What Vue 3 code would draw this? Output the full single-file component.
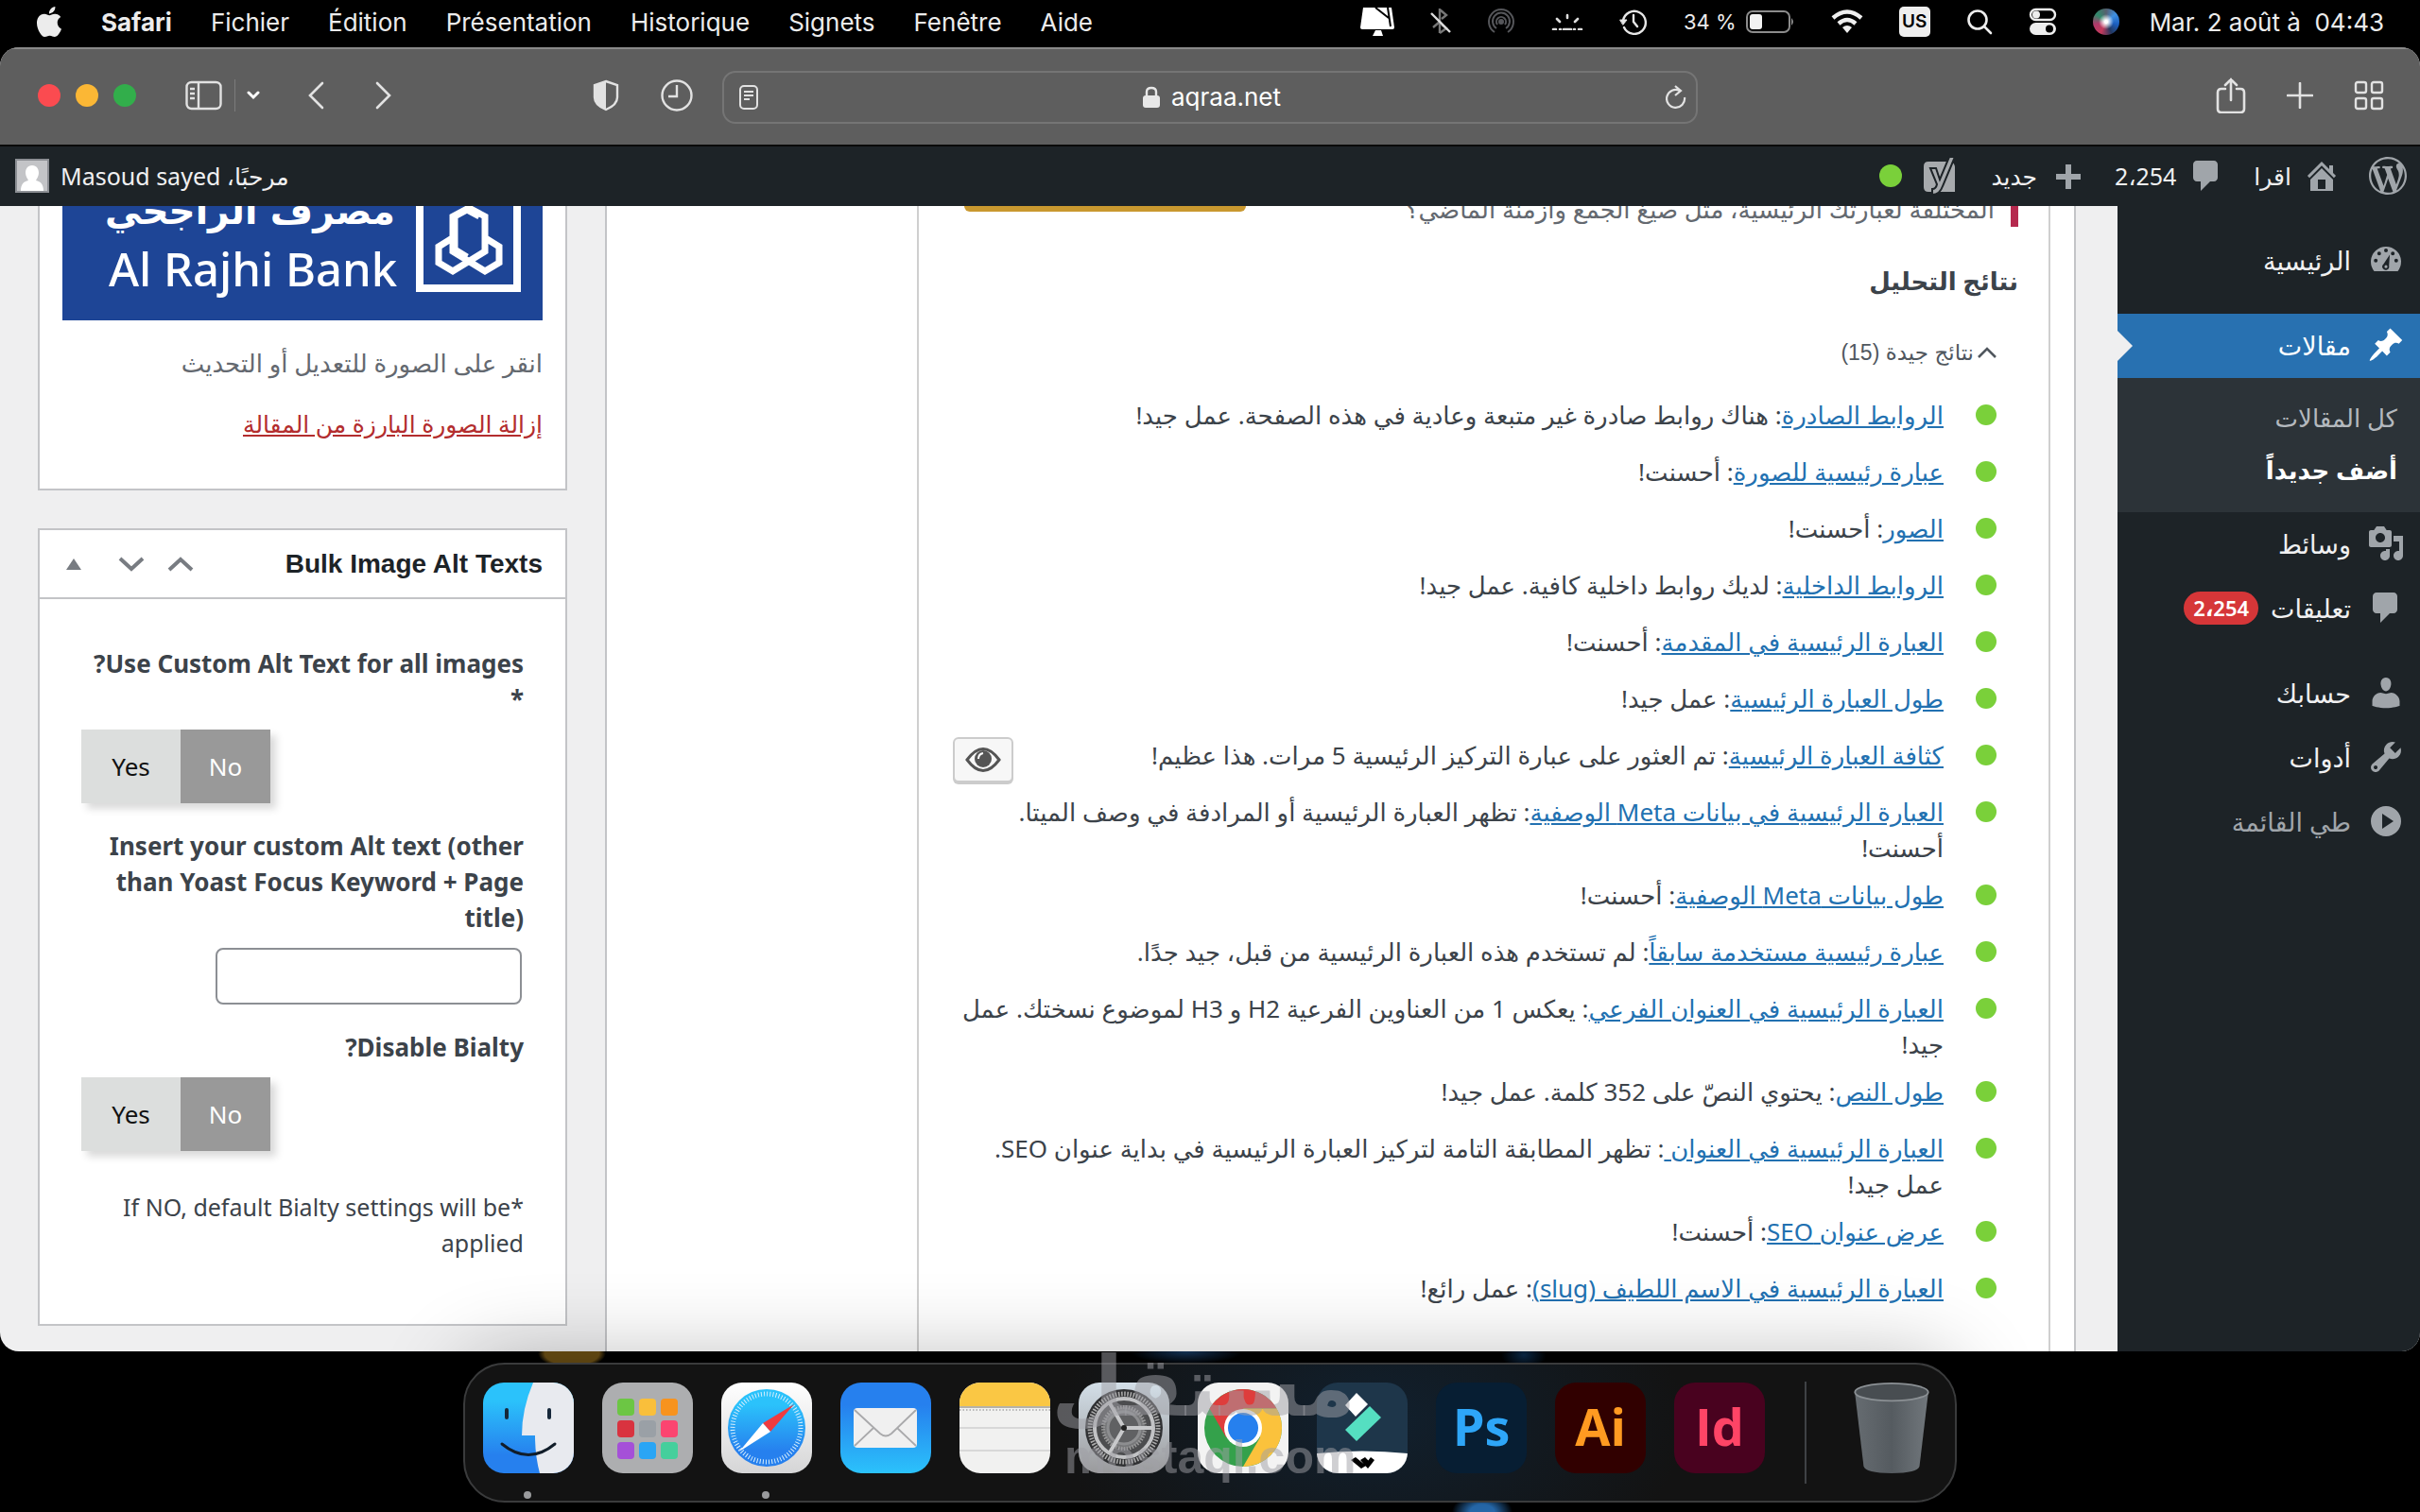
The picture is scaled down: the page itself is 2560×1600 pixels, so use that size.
<script setup>
import { ref } from "vue";

const menus = ["Fichier", "Édition", "Présentation", "Historique", "Signets", "Fenêtre", "Aide"];

// Ikoner til adminlinjen og WordPress-menuen i højre side
const icons = {
  wordpress: "M20 10c0-5.51-4.49-10-10-10C4.48 0 0 4.49 0 10c0 5.52 4.48 10 10 10 5.51 0 10-4.48 10-10zM7.78 15.37L4.37 6.22c.55-.02 1.17-.08 1.17-.08.5-.06.44-1.13-.06-1.11 0 0-1.45.11-2.37.11-.18 0-.37 0-.58-.01C4.12 2.69 6.87 1.11 10 1.11c2.33 0 4.45.87 6.05 2.34-.68-.11-1.65.39-1.65 1.58 0 .74.45 1.36.9 2.1.35.61.55 1.36.55 2.46 0 1.49-1.4 5-1.4 5l-3.03-8.37c.54-.02.82-.17.82-.17.5-.05.44-1.25-.06-1.22 0 0-1.44.12-2.38.12-.87 0-2.33-.12-2.33-.12-.5-.03-.56 1.2-.06 1.22l.92.08 1.26 3.41zM17.41 10c.24-.64.74-1.87.43-4.25.7 1.29 1.05 2.71 1.05 4.25 0 3.29-1.73 6.24-4.4 7.78.97-2.59 1.94-5.2 2.92-7.78zM6.1 18.09C3.12 16.65 1.11 13.53 1.11 10c0-1.3.23-2.48.72-3.59C3.25 10.3 4.67 14.2 6.1 18.09zm4.03-6.63l2.58 6.98c-.86.29-1.76.45-2.71.45-.79 0-1.57-.11-2.29-.33.81-2.38 1.62-4.74 2.42-7.1z",
  home: "M16 8.5l1.53 1.53-1.06 1.06L10 4.6l-6.47 6.49-1.06-1.06L10 2.5l4 4v-2h2v4zm-6-2.46l6 5.99V18H4v-5.97zM12 17v-5H8v5h4z",
  comments: "M5 2h9c1.1 0 2 .9 2 2v7c0 1.1-.9 2-2 2h-2l-5 5v-5H5c-1.1 0-2-.9-2-2V4c0-1.1.9-2 2-2z",
  plus: "M17 9v3h-5v5H9v-5H4V9h5V4h3v5h5z",
  pin: "M10.44 3.02l1.82-1.82 6.36 6.35-1.83 1.82c-1.05-.68-2.48-.57-3.41.36l-.75.75c-.92.93-1.04 2.35-.35 3.41l-1.83 1.82-2.41-2.41-2.8 2.79c-.42.42-3.38 2.71-3.8 2.29s1.86-3.39 2.28-3.81l2.79-2.79L4.1 9.36l1.83-1.82c1.05.69 2.48.57 3.4-.36l.75-.75c.93-.92 1.05-2.35.36-3.41z",
  dashboard: "M3.76 16h12.48A8 8 0 1 0 3.76 16zM10 4a1 1 0 1 1 0 2 1 1 0 0 1 0-2zM6.4 5.6a1 1 0 1 1 0 2 1 1 0 0 1 0-2zM4.6 9.4a1 1 0 1 1 0 2 1 1 0 0 1 0-2zM15.4 9.4a1 1 0 1 1 0 2 1 1 0 0 1 0-2zM13.6 5.6a1 1 0 1 1 0 2 1 1 0 0 1 0-2zM12 7.2l-.4 5.9a1.8 1.8 0 1 1-2.9-.9zM10 12.8a.8.8 0 1 0 0 1.6.8.8 0 0 0 0-1.6z",
  media: "M13 11V4c0-.55-.45-1-1-1h-1.67L9 1H5L3.67 3H2c-.55 0-1 .45-1 1v7c0 .55.45 1 1 1h10c.55 0 1-.45 1-1zM7 4.5c1.38 0 2.5 1.12 2.5 2.5S8.38 9.5 7 9.5 4.5 8.38 4.5 7 5.62 4.5 7 4.5zM14 6h5v10.5c0 1.38-1.12 2.5-2.5 2.5S14 17.88 14 16.5s1.12-2.5 2.5-2.5c.17 0 .34.02.5.05V9h-3V6zm-4 8.05V13h2v3.5c0 1.38-1.12 2.5-2.5 2.5S7 17.88 7 16.5 8.12 14 9.5 14c.17 0 .34.02.5.05z",
  users: "M10 9.25c-2.27 0-2.73-3.44-2.73-3.44C7 4.02 7.82 2 9.97 2c2.16 0 2.98 2.02 2.71 3.81 0 0-.41 3.44-2.68 3.44zM10 10.6L12.72 10c2.39 0 4.52 2.33 4.52 4.53v2.49s-3.65 1.13-7.24 1.13c-3.65 0-7.24-1.13-7.24-1.13v-2.49c0-2.25 1.94-4.48 4.47-4.48z",
  tools: "M16.68 9.77c-1.34 1.34-3.3 1.67-4.95.99l-5.41 6.52c-.99.99-2.59.99-3.58 0s-.99-2.59 0-3.57l6.52-5.42c-.68-1.65-.35-3.61.99-4.95 1.28-1.28 3.12-1.62 4.72-1.06l-2.89 2.89 2.82 2.82 2.86-2.87c.53 1.58.18 3.39-1.08 4.65zM3.81 16.21c.4.39 1.04.39 1.43 0 .4-.4.4-1.04 0-1.43-.39-.4-1.03-.4-1.43 0-.39.39-.39 1.03 0 1.43z",
  collapse: "M10 2a8 8 0 1 1 0 16 8 8 0 0 1 0-16zM8 6v8l6-4z"
};

const results = [
  { link: "الروابط الصادرة", text: ": هناك روابط صادرة غير متبعة وعادية في هذه الصفحة. عمل جيد!" },
  { link: "عبارة رئيسية للصورة", text: ": أحسنت!" },
  { link: "الصور", text: ": أحسنت!" },
  { link: "الروابط الداخلية", text: ": لديك روابط داخلية كافية. عمل جيد!" },
  { link: "العبارة الرئيسية في المقدمة", text: ": أحسنت!" },
  { link: "طول العبارة الرئيسية", text: ": عمل جيد!" },
  { link: "كثافة العبارة الرئيسية", text: ": تم العثور على عبارة التركيز الرئيسية 5 مرات. هذا عظيم!", eye: true },
  { link: "العبارة الرئيسية في بيانات Meta الوصفية", text: ": تظهر العبارة الرئيسية أو المرادفة في وصف الميتا.", more: "أحسنت!" },
  { link: "طول بيانات Meta الوصفية", text: ": أحسنت!" },
  { link: "عبارة رئيسية مستخدمة سابقاً", text: ": لم تستخدم هذه العبارة الرئيسية من قبل، جيد جدًا." },
  { link: "العبارة الرئيسية في العنوان الفرعي", text: ": يعكس 1 من العناوين الفرعية H2 و H3 لموضوع نسختك. عمل", more: "جيد!" },
  { link: "طول النص", text: ": يحتوي النصّ على 352 كلمة. عمل جيد!" },
  { link: "العبارة الرئيسية في العنوان ", text: ": تظهر المطابقة التامة لتركيز العبارة الرئيسية في بداية عنوان SEO.", more: "عمل جيد!" },
  { link: "عرض عنوان SEO", text: ": أحسنت!" },
  { link: "العبارة الرئيسية في الاسم اللطيف (slug)", text: ": عمل رائع!" }
];

const useCustom = ref("no");
const disableBialty = ref("no");
const altText = ref("");

const launchpad = ["#6cc644", "#f9bf3b", "#f7931e", "#d9333f", "#9aa0a6", "#fb4570", "#a550d8", "#2aa5f5", "#45cf9c"];
</script>

<template>
  <div class="desktop">
    <header class="menubar">
      <svg class="apple" viewBox="0 0 24 24" width="32" height="32" fill="#ececec">
        <path d="M12.152 6.896c-.948 0-2.415-1.078-3.96-1.04-2.04.027-3.91 1.183-4.961 3.014-2.117 3.675-.546 9.103 1.519 12.09 1.013 1.454 2.208 3.09 3.792 3.039 1.52-.065 2.09-.987 3.935-.987 1.831 0 2.35.987 3.96.948 1.637-.026 2.676-1.48 3.676-2.948 1.156-1.688 1.636-3.325 1.662-3.415-.039-.013-3.182-1.221-3.22-4.857-.026-3.04 2.48-4.494 2.597-4.559-1.429-2.09-3.623-2.324-4.39-2.376-2-.156-3.675 1.09-4.61 1.09zM15.53 3.83c.843-1.012 1.4-2.427 1.245-3.83-1.207.052-2.662.805-3.532 1.818-.78.896-1.454 2.338-1.273 3.714 1.338.104 2.715-.688 3.559-1.701" />
      </svg>
      <b>Safari</b>
      <span v-for="m in menus" :key="m">{{ m }}</span>

      <div class="status">
        <svg width="36" height="30" viewBox="0 0 36 30">
          <path d="M3 0h30l3 21q0 2-2 2H2q-2 0-2-2z" fill="#fff" />
          <path d="M16 0l14 11M29 0l3 20" fill="none" stroke="#000" stroke-width="2" />
          <path d="M16 24h6l2 6H13z" fill="#fff" />
        </svg>
        <svg width="22" height="28" viewBox="0 0 22 28" fill="none" stroke-width="2.4">
          <path d="M3 20l7-6M10 26V1l7 6-5 4M12 17l5 4-7 5" stroke="#777" />
          <path d="M1 5l20 20" stroke="#ddd" />
        </svg>
        <svg width="30" height="28" viewBox="0 0 30 28" fill="none" stroke="#55565a" stroke-width="2">
          <path d="M8 25a13 13 0 1 1 14 0M10 21a9 9 0 1 1 10 0M11 17a5 5 0 1 1 8 0" />
          <circle cx="15" cy="14" r="2" fill="#55565a" />
        </svg>
        <svg width="34" height="18" viewBox="0 0 34 18" fill="none" stroke="#ddd" stroke-width="2.6" stroke-linecap="round">
          <path d="M17 2v3M6 6l3 3M28 6l-3 3M2 17h3M29 17h3M13 17h8M9 17h1M24 17h1" />
        </svg>
        <svg width="30" height="28" viewBox="0 0 30 28" fill="none" stroke="#e6e6e6" stroke-width="2.4" stroke-linecap="round">
          <path d="M5 20a12 12 0 1 0-1-7M15 7v7l4 5" />
          <path d="M1 12h7l-4 5z" fill="#e6e6e6" stroke-width="1" />
        </svg>
        <span class="battery">34 %
          <svg width="52" height="26" viewBox="0 0 52 26">
            <rect x="1" y="2" width="45" height="22" rx="6" fill="none" stroke="#8c8c8c" stroke-width="2" />
            <rect x="4" y="5" width="13" height="16" rx="3" fill="#f2f2f2" />
            <path d="M48 9q4 4 0 8z" fill="#8c8c8c" />
          </svg>
        </span>
        <svg width="34" height="26" viewBox="0 0 34 26" fill="none" stroke="#eee" stroke-width="4.4">
          <path d="M2 9q15-13 30 0M8 15q9-8 18 0" />
          <path d="M17 25l-5-6q5-4 10 0z" fill="#eee" stroke="none" />
        </svg>
        <span class="lang">US</span>
        <svg width="28" height="28" viewBox="0 0 28 28" fill="none" stroke="#eee" stroke-width="2.6" stroke-linecap="round">
          <circle cx="12" cy="12" r="9.5" /><path d="M19 19l7 7" />
        </svg>
        <svg width="30" height="30" viewBox="0 0 30 30">
          <rect x="2" y="2" width="26" height="11" rx="5.5" fill="none" stroke="#eee" stroke-width="2.4" />
          <circle cx="8" cy="7.5" r="4" fill="#eee" />
          <rect x="1" y="16" width="28" height="13" rx="6.5" fill="#eee" />
          <circle cx="22" cy="22.5" r="4" fill="#000" />
        </svg>
        <i class="siri"></i>
        <span>Mar. 2 août à &nbsp;04:43</span>
      </div>
    </header>

    <main class="window">
      <div class="toolbar">
        <div class="tools-left">
          <i class="light red"></i><i class="light yellow"></i><i class="light green"></i>
          <button class="tool sidebar-toggle" aria-label="Barre latérale">
            <svg width="40" height="32" viewBox="0 0 40 32" fill="none" stroke="#e2e2e2" stroke-width="2.4">
              <rect x="1.5" y="2" width="36" height="28" rx="5" /><path d="M14 2v28M5 9h5M5 14h5M5 19h5" />
            </svg>
          </button>
          <i class="divider"></i>
          <button class="tool" aria-label="Groupes">
            <svg width="14" height="10" viewBox="0 0 14 10" fill="none" stroke="#fff" stroke-width="3" stroke-linecap="round"><path d="M2 2l5 5 5-5" /></svg>
          </button>
          <button class="tool back" aria-label="Précédent">
            <svg width="18" height="30" viewBox="0 0 18 30" fill="none" stroke="#e2e2e2" stroke-width="2.6" stroke-linecap="round"><path d="M16 2L3 15l13 13" /></svg>
          </button>
          <button class="tool forward" aria-label="Suivant">
            <svg width="18" height="30" viewBox="0 0 18 30" fill="none" stroke="#e2e2e2" stroke-width="2.6" stroke-linecap="round"><path d="M2 2l13 13L2 28" /></svg>
          </button>
          <button class="tool shield" aria-label="Confidentialité">
            <svg width="28" height="34" viewBox="0 0 28 34">
              <path d="M14 2l12 4v13q0 8-12 13Q2 27 2 19V6z" fill="none" stroke="#e2e2e2" stroke-width="2.4" />
              <path d="M14 2L2 6v13q0 8 12 13z" fill="#e2e2e2" />
            </svg>
          </button>
          <button class="tool" aria-label="Historique">
            <svg width="34" height="34" viewBox="0 0 34 34" fill="none" stroke="#e2e2e2" stroke-width="2.4"><circle cx="17" cy="17" r="15.5" /><path d="M17 6v12H8" /></svg>
          </button>
        </div>
        <div class="url">
          <svg width="20" height="26" viewBox="0 0 20 26" fill="none" stroke="#e2e2e2" stroke-width="2"><rect x="1" y="1" width="18" height="24" rx="4" /><path d="M5 7h10M5 11h10M5 15h6" /></svg>
          <div class="host">
            <svg width="18" height="24" viewBox="0 0 18 24"><rect y="10" width="18" height="13" rx="3" fill="#e8e8e8" /><path d="M4 11V6q0-4 5-4t5 4v5" fill="none" stroke="#e8e8e8" stroke-width="2.4" /></svg>
            aqraa.net
          </div>
          <svg width="22" height="26" viewBox="0 0 22 26" fill="none" stroke="#e2e2e2" stroke-width="2.2"><path d="M15 6A9.500 9.500 0 1 0 20 13M10 1l6 5-6 5" /></svg>
        </div>
        <div class="tools-right">
          <button class="tool" aria-label="Partager">
            <svg width="32" height="38" viewBox="0 0 32 38" fill="none" stroke="#e2e2e2" stroke-width="2.6" stroke-linecap="round"><path d="M10 12H6q-4 0-4 4v17q0 4 4 4h20q4 0 4-4V16q0-4-4-4h-4M16 24V2M10 8l6-6 6 6" /></svg>
          </button>
          <button class="tool" aria-label="Nouvel onglet">
            <svg width="28" height="28" viewBox="0 0 28 28" stroke="#e2e2e2" stroke-width="2.6" stroke-linecap="round"><path d="M14 1v26M1 14h26" /></svg>
          </button>
          <button class="tool" aria-label="Onglets">
            <svg width="32" height="32" viewBox="0 0 32 32" fill="none" stroke="#e2e2e2" stroke-width="2.4">
              <rect x="2" y="2" width="11" height="11" rx="2" /><rect x="19" y="2" width="11" height="11" rx="2" />
              <rect x="2" y="19" width="11" height="11" rx="2" /><rect x="19" y="19" width="11" height="11" rx="2" />
            </svg>
          </button>
        </div>
      </div>

      <div class="wp" dir="rtl">
        <nav class="adminbar">
          <a href="#"><svg class="dash" viewBox="0 0 20 20"><path :d="icons.wordpress" /></svg></a>
          <a href="#"><svg class="dash" viewBox="0 0 20 20"><path :d="icons.home" fill-rule="evenodd" /></svg>اقرا</a>
          <a href="#"><svg class="dash" viewBox="0 0 20 20"><path :d="icons.comments" /></svg><bdi>2،254</bdi></a>
          <a href="#"><svg class="dash" viewBox="0 0 20 20"><path :d="icons.plus" /></svg>جديد</a>
          <a href="#" class="yoast">
            <svg width="36" height="42" viewBox="0 0 36 42">
              <path d="M6 6h24q4 2 4 6v26H6q-5 0-5-5V11q0-5 5-5z" fill="#a7aaad" />
              <path d="M28 1h6L21 32q-3 9-11 9v-6q4 0 5-5L8 13h6l4 12z" fill="#a7aaad" stroke="#1d2327" stroke-width="2" />
            </svg>
            <i class="score"></i>
          </a>
          <a href="#" class="user">مرحبًا، Masoud sayed
            <svg width="36" height="36" viewBox="0 0 36 36"><rect width="36" height="36" fill="#8c8f94" /><rect x="2" y="2" width="32" height="32" fill="#c3c4c7" /><path d="M18 7c5 0 7 4 7 8 0 3-2 6-3 8 5 1 8 4 8 11H6c0-7 3-10 8-11-1-2-3-5-3-8 0-4 2-8 7-8z" fill="#fff" /></svg>
          </a>
        </nav>

        <div class="body">
          <aside class="adminmenu">
            <a href="#" class="item"><svg class="dash" viewBox="0 0 20 20"><path :d="icons.dashboard" fill-rule="evenodd" /></svg>الرئيسية</a>
            <a href="#" class="item current gap"><svg class="dash" viewBox="0 0 20 20"><path :d="icons.pin" /></svg>مقالات</a>
            <div class="submenu">
              <a href="#">كل المقالات</a>
              <a href="#" class="active">أضف جديداً</a>
            </div>
            <a href="#" class="item"><svg class="dash" viewBox="0 0 20 20"><path :d="icons.media" fill-rule="evenodd" /></svg>وسائط</a>
            <a href="#" class="item"><svg class="dash" viewBox="0 0 20 20"><path :d="icons.comments" /></svg>تعليقات <bdi class="count">2،254</bdi></a>
            <a href="#" class="item gap"><svg class="dash" viewBox="0 0 20 20"><path :d="icons.users" /></svg>حسابك</a>
            <a href="#" class="item"><svg class="dash" viewBox="0 0 20 20"><path :d="icons.tools" fill-rule="evenodd" /></svg>أدوات</a>
            <button class="item collapse"><svg class="dash" viewBox="0 0 20 20"><path :d="icons.collapse" fill-rule="evenodd" /></svg>طي القائمة</button>
          </aside>

          <section class="editor">
            <div class="panel">
              <div class="notice">
                <p>المختلفة لعبارتك الرئيسية، مثل صيغ الجمع وأزمنة الماضي؟</p>
                <i class="upsell"></i>
              </div>
              <h2>نتائج التحليل</h2>
              <button class="group">
                <svg width="22" height="14" viewBox="0 0 22 14" fill="none" stroke="#50575e" stroke-width="2.6"><path d="M2 12l9-9 9 9" /></svg>
                نتائج جيدة (15)
              </button>
              <ul class="results">
                <li v-for="r in results" :key="r.link">
                  <i class="bullet"></i>
                  <p><a href="#">{{ r.link }}</a>{{ r.text }}<template v-if="r.more"><br />{{ r.more }}</template></p>
                  <button v-if="r.eye" class="eye" aria-label="إبراز">
                    <svg width="38" height="26" viewBox="0 0 38 26">
                      <path d="M2 13Q19-10 36 13 19 36 2 13z" fill="none" stroke="#555" stroke-width="3" />
                      <circle cx="19" cy="12" r="9" fill="#555" /><path d="M14 12q0-5 5-6" fill="none" stroke="#fff" stroke-width="2" />
                    </svg>
                  </button>
                </li>
              </ul>
            </div>
          </section>

          <aside class="metaboxes">
            <div class="box featured">
              <svg class="bank" viewBox="0 0 508 121" direction="ltr">
                <rect width="508" height="121" fill="#1e4596" />
                <text x="352" y="19" class="bank-ar" direction="rtl">مصرف الراجحي</text>
                <text x="49" y="85" class="bank-en">Al Rajhi Bank</text>
                <path d="M378 -10v97h103v-97" fill="none" stroke="#fff" stroke-width="8" />
                <path d="M414 32V12l15-9 15 9v32l17 11" fill="none" stroke="none" />
                <g fill="none" stroke="#fff" stroke-width="7">
                  <path d="M429 54l-13-8V11l13-7 13 7" transform="translate(-1 0)" />
                  <path d="M414 33l-16 10v17l15 9 34-21V11l-17-9-17 9v37l34 21 15-9V43l-16-10" />
                </g>
              </svg>
              <p class="hint">انقر على الصورة للتعديل أو التحديث</p>
              <a href="#" class="remove">إزالة الصورة البارزة من المقالة</a>
            </div>

            <div class="box bialty">
              <div class="head">
                <h2>Bulk Image Alt Texts</h2>
                <button aria-label="أعلى"><svg width="28" height="16" viewBox="0 0 28 16" fill="none" stroke="#787c82" stroke-width="4"><path d="M2 14L14 3l12 11" /></svg></button>
                <button aria-label="أسفل"><svg width="28" height="16" viewBox="0 0 28 16" fill="none" stroke="#787c82" stroke-width="4"><path d="M2 2l12 11L26 2" /></svg></button>
                <button class="toggle" aria-label="طي"><svg width="16" height="12" viewBox="0 0 16 12" fill="#787c82"><path d="M0 12L8 0l8 12z" /></svg></button>
              </div>
              <div class="inside">
                <p class="label">Use Custom Alt Text for all images?<br />*</p>
                <div class="switch" dir="ltr">
                  <label :class="{ on: useCustom === 'yes' }"><input v-model="useCustom" type="radio" name="custom" value="yes" />Yes</label>
                  <label :class="{ on: useCustom === 'no' }"><input v-model="useCustom" type="radio" name="custom" value="no" />No</label>
                </div>
                <label class="label" for="alt" dir="ltr">Insert your custom Alt text (other<br />than Yoast Focus Keyword + Page<br />title)</label>
                <input id="alt" v-model="altText" class="alt" type="text" />
                <p class="label">Disable Bialty?</p>
                <div class="switch" dir="ltr">
                  <label :class="{ on: disableBialty === 'yes' }"><input v-model="disableBialty" type="radio" name="disable" value="yes" />Yes</label>
                  <label :class="{ on: disableBialty === 'no' }"><input v-model="disableBialty" type="radio" name="disable" value="no" />No</label>
                </div>
                <p class="note">*If NO, default Bialty settings will be<br />applied</p>
              </div>
            </div>
          </aside>
        </div>
      </div>
    </main>

    <footer class="shelf">
      <div class="dock">
        <!-- Finder -->
        <svg class="app" viewBox="0 0 96 96">
          <defs>
            <linearGradient id="blue" x2="0" y2="1"><stop offset=".2" stop-color="#2bc2fb" /><stop offset=".8" stop-color="#2680ee" /></linearGradient>
            <linearGradient id="blueUp" x2="0" y2="1"><stop offset=".25" stop-color="#2680ee" /><stop offset="1" stop-color="#2bc2fb" /></linearGradient>
            <linearGradient id="white" x2="0" y2="1"><stop offset="0" stop-color="#fff" /><stop offset="1" stop-color="#d5d5d6" /></linearGradient>
            <linearGradient id="steel" x2="0" y2="1"><stop offset="0" stop-color="#d3dfe8" /><stop offset="1" stop-color="#9a9a9c" /></linearGradient>
            <linearGradient id="bin"><stop offset="0" stop-color="#666c71" /><stop offset=".5" stop-color="#555b60" /><stop offset="1" stop-color="#71777c" /></linearGradient>
            <clipPath id="tile"><rect width="96" height="96" rx="22" /></clipPath>
          </defs>
          <g clip-path="url(#tile)">
            <rect width="96" height="96" fill="url(#blue)" />
            <path d="M53 0Q41 28 41 56h14q0 22 5 40h36V0z" fill="#e8eaef" />
            <path d="M25 29v8M70 29v8" stroke="#16283a" stroke-width="4" stroke-linecap="round" />
            <path d="M20 65q28 23 56 0" fill="none" stroke="#111d29" stroke-width="3" stroke-linecap="round" />
          </g>
          <circle cx="47" cy="119" r="4" fill="#9a9b9d" />
        </svg>
        <!-- Launchpad -->
        <svg class="app" viewBox="0 0 96 96">
          <rect width="96" height="96" rx="22" fill="#adaeb0" />
          <rect v-for="(c, i) in launchpad" :key="c" :x="16 + (i % 3) * 23" :y="17 + Math.floor(i / 3) * 23" width="18" height="18" rx="4" :fill="c" />
        </svg>
        <!-- Safari -->
        <svg class="app" viewBox="0 0 96 96">
          <rect width="96" height="96" rx="22" fill="url(#white)" />
          <circle cx="48" cy="48" r="41" fill="url(#blue)" />
          <circle cx="48" cy="48" r="36" fill="none" stroke="#d7eefc" stroke-width="5" stroke-dasharray="1 2.14" />
          <path d="M77 23L44 43l8 9z" fill="#ef3b3f" /><path d="M19 73l25-30 8 9z" fill="#fff" />
          <circle cx="47" cy="119" r="4" fill="#9a9b9d" />
        </svg>
        <!-- Mail -->
        <svg class="app" viewBox="0 0 96 96">
          <rect width="96" height="96" rx="22" fill="url(#blueUp)" />
          <rect x="14" y="27" width="67" height="42" rx="4" fill="#f0f0f0" />
          <path d="M15 67l20-19M80 67L60 48M15 29l27 25q6 5 12 0l26-25" fill="none" stroke="#a9a9ab" stroke-width="1.8" />
        </svg>
        <!-- Notes -->
        <svg class="app" viewBox="0 0 96 96">
          <g clip-path="url(#tile)">
            <rect width="96" height="96" fill="#f1f1f0" /><rect width="96" height="25" fill="#fac744" />
            <path d="M0 26h96" stroke="#b5b2a8" stroke-width="2" />
            <path d="M0 29h96" stroke="#b9b9b9" stroke-width="2" stroke-dasharray="1.5 2" />
            <path d="M0 48h96M0 72h96" stroke="#d0d0d0" stroke-width="1.6" />
          </g>
        </svg>
        <!-- Préférences -->
        <svg class="app" viewBox="0 0 96 96">
          <rect width="96" height="96" rx="22" fill="url(#steel)" />
          <circle cx="48" cy="48" r="41" fill="#303133" />
          <circle cx="48" cy="48" r="36" fill="none" stroke="#aaa" stroke-width="5" stroke-dasharray="1.6 1.54" />
          <circle cx="48" cy="48" r="31" fill="#4c4d4f" stroke="#c2c3c5" stroke-width="4" />
          <circle cx="48" cy="48" r="22" fill="#77787a" stroke="#999" stroke-width="4" stroke-dasharray="1.5 1.5" />
          <circle cx="48" cy="48" r="17" fill="#606163" stroke="#8d8e90" stroke-width="3" />
          <path d="M48 48h30M48 48L33 22M48 48L33 74" stroke="#c8c9cb" stroke-width="4" />
          <circle cx="48" cy="48" r="3" fill="#222" />
        </svg>
        <!-- Chrome -->
        <svg class="app" viewBox="0 0 96 96">
          <rect width="96" height="96" rx="22" fill="#f3f3f3" />
          <circle cx="48" cy="48" r="41" fill="#34a14b" />
          <path d="M12.500 27.500A41 41 0 0 1 83.500 27.500H48V48L30 58z" fill="#de3d3c" />
          <path d="M48 27.500h35.500A41 41 0 0 1 48 89l18-31z" fill="#fbc23c" />
          <circle cx="48" cy="48" r="20" fill="#fff" /><circle cx="48" cy="48" r="16" fill="#2680ee" />
        </svg>
        <!-- Filmora -->
        <svg class="app" viewBox="0 0 96 96">
          <g clip-path="url(#tile)">
            <rect width="96" height="96" fill="#1e364a" /><path d="M0 75q48-5 96 0v21H0z" fill="#fff" />
            <path d="M42 11l12 12-13 13-11-12z" fill="#fff" /><path d="M56 25l12 12-26 25-12-12z" fill="#55dfc1" />
            <path d="M36 82l5-3 11 9-5 3zM46 82l5-3 7 7-4 5zM54 83l3-4 4 3-3 4z" fill="#000" />
          </g>
        </svg>
        <span class="app adobe ps">Ps</span>
        <span class="app adobe ai">Ai</span>
        <span class="app adobe id">Id</span>
        <i class="bar"></i>
        <svg class="app" viewBox="0 0 96 104">
          <path d="M6 12l10 84q2 8 32 8t32-8l10-84z" fill="url(#bin)" />
          <ellipse cx="48" cy="11" rx="42" ry="10" fill="#484d51" stroke="#8b9094" stroke-width="2" />
        </svg>
      </div>
      <div class="watermark">
        <span dir="rtl">مستقل</span>
        <b>mostaql.com</b>
      </div>
    </footer>
  </div>
</template>

<style>
body {
  margin: 0;
  background: #000;
}
</style>

<style scoped>
.desktop {
  height: 100vh;
  display: flex;
  flex-direction: column;
  overflow: hidden;
  background:
    radial-gradient(ellipse 36px 16px at 605px 1432px, #6b4f14 80%, transparent),
    radial-gradient(ellipse 60px 14px at 1255px 1430px, #17395f, transparent),
    radial-gradient(ellipse 24px 16px at 1612px 1434px, #0d2b4b, transparent),
    radial-gradient(ellipse 32px 20px at 1568px 1600px, #2b76c0 40%, transparent),
    #000;
  font-family: "Noto Sans", "DejaVu Sans", sans-serif;
  font-size: 26px;
}

p, h2, ul {
  margin: 0;
  padding: 0;
}

svg {
  display: block;
  flex: none;
}

button {
  border: none;
  background: none;
  padding: 0;
  font: inherit;
  color: inherit;
  cursor: pointer;
}

/* Menulinje */
.menubar {
  height: 50px;
  flex: none;
  display: flex;
  align-items: center;
  gap: 41px;
  padding: 0 38px 4px 36px;
  box-sizing: border-box;
  color: #ececec;
  font-family: Inter, sans-serif;
  font-size: 26px;
  white-space: nowrap;
}

.apple {
  margin-right: -2px;
}

.status {
  margin-left: auto;
  display: flex;
  align-items: center;
  gap: 38px;
}

.status > :last-child {
  margin-left: -6px;
}

.battery {
  display: flex;
  align-items: center;
  gap: 10px;
  font-size: 22px;
}

.lang {
  background: #eee;
  color: #000;
  border-radius: 5px;
  height: 32px;
  width: 33px;
  line-height: 32px;
  text-align: center;
  font-size: 19px;
  font-weight: 600;
}

.siri {
  width: 28px;
  height: 28px;
  border-radius: 50%;
  background: radial-gradient(circle, #fff 8%, transparent 40%), conic-gradient(#56606e, #3f8fe0, #1b5fc0, #23385f, #c33a5c, #b03a6b, #2f8a6b, #56606e);
}

/* Safari-vindue */
.window {
  flex: 1;
  min-height: 0;
  display: flex;
  flex-direction: column;
  border-radius: 20px;
  overflow: hidden;
  background: #efeff0;
}

.toolbar {
  height: 105px;
  flex: none;
  box-sizing: border-box;
  display: grid;
  grid-template-columns: 1fr minmax(0, 1032px) 1fr;
  align-items: center;
  background: #5e5e5e;
  border-top: 2px solid #8a8a8a;
  border-bottom: 2px solid #0a0a0a;
}

.tools-left,
.tools-right {
  display: flex;
  align-items: center;
  padding-bottom: 3px;
}

.tools-left {
  padding-left: 40px;
  padding-right: 31px;
}

.tools-right {
  justify-content: flex-end;
  gap: 43px;
  padding-right: 38px;
}

.light {
  width: 24px;
  height: 24px;
  margin-right: 16px;
  border-radius: 50%;
}

.red { background: #fb4b50; }
.yellow { background: #fbb735; }
.green { background: #32ae4b; }

.sidebar-toggle {
  margin-left: 36px;
}

.divider {
  width: 1px;
  height: 34px;
  margin: 0 12px;
  background: #7c7c7c;
}

.back { margin-left: 50px; }
.forward { margin-left: 54px; }
.shield { margin: 0 44px 0 auto; }

.url {
  display: flex;
  align-items: center;
  justify-content: space-between;
  height: 56px;
  padding: 0 10px 0 16px;
  box-sizing: border-box;
  border: 2px solid #757575;
  border-radius: 14px;
}

.host {
  display: flex;
  align-items: center;
  gap: 12px;
  color: #fff;
  font-family: Inter, sans-serif;
  font-size: 26px;
}

/* WordPress */
.wp {
  flex: 1;
  min-height: 0;
  display: flex;
  flex-direction: column;
}

.adminbar {
  height: 63px;
  flex: none;
  display: flex;
  align-items: center;
  gap: 30px;
  padding: 0 14px 2px 16px;
  box-sizing: border-box;
  background: #1d2327;
  font-size: 25px;
}

.adminbar a {
  display: flex;
  align-items: center;
  gap: 12px;
  color: #f0f0f1;
  text-decoration: none;
}

.dash {
  width: 40px;
  height: 40px;
  fill: #a0a5aa;
}

.adminbar .yoast {
  gap: 22px;
  margin-right: 6px;
}

.score {
  width: 24px;
  height: 24px;
  border-radius: 50%;
  background: #7ad03a;
}

.adminbar .user {
  margin-right: auto;
}

.body {
  flex: 1;
  min-height: 0;
  display: flex;
  overflow: hidden;
}

.adminmenu {
  width: 320px;
  flex: none;
  padding-top: 24px;
  box-sizing: border-box;
  background: #1d2327;
}

.item {
  display: flex;
  align-items: center;
  gap: 17px;
  width: 100%;
  height: 68px;
  padding: 0 16px 2px;
  box-sizing: border-box;
  color: #f0f0f1;
  font-size: 27px;
  text-decoration: none;
}

.gap {
  margin-top: 22px;
}

.current {
  position: relative;
  background: #2871b1;
  color: #fff;
}

.current .dash {
  fill: #fff;
}

.current::after {
  content: "";
  position: absolute;
  left: 0;
  top: 18px;
  border: 16px solid transparent;
  border-left-color: #efeff0;
  border-right: 0;
}

.submenu {
  padding: 15px 24px 17px;
  background: #2c3338;
}

.submenu a {
  display: block;
  line-height: 55px;
  color: #b4b9be;
  text-decoration: none;
}

.submenu .active {
  color: #fff;
  font-weight: 700;
}

.count {
  margin-right: -4px;
  padding: 0 10px;
  line-height: 35px;
  border-radius: 18px;
  background: #d63638;
  color: #fff;
  font-size: 22px;
  font-weight: 600;
}

.collapse {
  color: #a0a5aa;
}

.editor {
  flex: 1;
  min-width: 0;
  display: flex;
  margin-right: 44px;
  padding-right: 25px;
  background: #fff;
  border-right: 2px solid #c3c4c7;
  border-left: 2px solid #c3c4c7;
}

.panel {
  flex: 1;
  min-width: 0;
  margin-left: 328px;
  padding: 0 32px 0 36px;
  border-right: 2px solid #cfcfcf;
  border-left: 2px solid #cfcfcf;
  color: #3c434a;
}

.notice {
  display: flex;
  justify-content: space-between;
  align-items: flex-end;
  height: 22px;
  padding: 0 17px 0 12px;
  overflow: hidden;
  border-right: 8px solid #b5294e;
  color: #646970;
}

.notice p {
  line-height: 38px;
}

.upsell {
  align-self: flex-start;
  width: 298px;
  height: 6px;
  border-radius: 0 0 8px 8px;
  background: #c9982f;
}

.panel h2 {
  margin-top: 38px;
  font-size: 26px;
  line-height: 38px;
}

.group {
  display: flex;
  align-items: center;
  gap: 3px;
  height: 38px;
  margin: 38px 22px 28px 0;
  color: #50575e;
  font-family: "Liberation Sans", "DejaVu Sans", sans-serif;
  font-size: 23px;
}

.results {
  list-style: none;
}

.results li {
  display: flex;
  gap: 34px;
  min-height: 48px;
  margin: 0 23px 12px 0;
  line-height: 38px;
}

.bullet {
  flex: none;
  width: 22px;
  height: 22px;
  margin-top: 8px;
  border-radius: 50%;
  background: #7ad03a;
}

.results p {
  flex: 1;
  white-space: nowrap;
}

.results a {
  color: #2271b1;
}

.eye {
  flex: none;
  display: grid;
  place-items: center;
  width: 64px;
  height: 48px;
  border: 2px solid #ccc;
  border-radius: 6px;
  box-shadow: 0 2px 0 #ccc;
  background: #f7f7f7;
}

/* Metabokse */
.metaboxes {
  flex: none;
  width: 640px;
  box-sizing: border-box;
  padding: 0 40px;
}

.box {
  background: #fff;
  border: 2px solid #c3c4c7;
}

.featured {
  border-top: none;
  padding: 0 24px 50px;
  margin-bottom: 40px;
  line-height: 38px;
}

.bank {
  width: 100%;
}

.bank text {
  fill: #fff;
}

.bank-ar {
  font: 700 39px "DejaVu Sans", sans-serif;
}

.bank-en {
  font: 500 49px "Noto Sans", sans-serif;
}

.hint {
  margin: 26px 0;
  color: #646970;
}

.remove {
  display: block;
  color: #b32d2e;
  font-size: 25px;
}

.head {
  display: flex;
  align-items: center;
  gap: 24px;
  height: 71px;
  padding: 0 24px;
  border-bottom: 2px solid #c3c4c7;
}

.head h2 {
  flex: 1;
  color: #1d2327;
  font-family: "Liberation Sans", sans-serif;
  font-size: 28px;
}

.toggle {
  margin: 0 15px 0 4px;
}

.inside {
  padding: 49px 44px 67px;
  color: #3c434a;
  line-height: 38px;
  white-space: nowrap;
}

.label {
  display: block;
  font-weight: 700;
  text-align: right;
}

/* Kontakten står til venstre i boksen */
.switch {
  display: flex;
  width: 200px;
  margin: 13px auto 26px 0;
  box-shadow: 6px 6px 8px rgba(0, 0, 0, 0.15);
}

.inside .switch {
  margin-right: auto;
}

.switch label {
  position: relative;
  flex: 1;
  height: 78px;
  line-height: 78px;
  text-align: center;
  background: #dcdedd;
  color: #111;
}

.switch label:first-child {
  flex: none;
  width: 105px;
}

.switch input {
  position: absolute;
  opacity: 0;
}

.switch .on {
  background: #999;
  color: #fff;
}

.alt {
  display: block;
  width: 324px;
  height: 60px;
  margin: 13px 2px 26px 0;
  box-sizing: border-box;
  border: 2px solid #8c8f94;
  border-radius: 8px;
  font-size: 26px;
}

.note {
  margin-top: 40px;
  font-size: 25px;
}

/* Dock */
.shelf {
  position: relative;
  flex: none;
  height: 170px;
  display: flex;
  justify-content: center;
  align-items: flex-start;
  padding-top: 12px;
  box-sizing: border-box;
}

.dock {
  display: flex;
  align-items: center;
  gap: 30px;
  height: 148px;
  padding: 0 19px 10px;
  box-sizing: border-box;
  border: 2px solid #3a3b3c;
  border-radius: 44px;
  background: radial-gradient(ellipse 330px 200px at 960px 60px, #11202e, #131313);
  box-shadow: 0 0 90px rgba(0, 0, 0, 0.3);
}

.app {
  width: 96px;
  height: 96px;
  flex: none;
  overflow: visible;
}

.adobe {
  border-radius: 22px;
  font: 700 54px/92px "Open Sans", "Noto Sans", sans-serif;
  text-align: center;
}

.ps { background: #071e33; color: #2ea6f8; }
.ai { background: #310000; color: #ff9a21; }
.id { background: #49021f; color: #ff4466; }

.bar {
  width: 2px;
  height: 108px;
  margin: 10px 12px 0;
  background: #3f4245;
}

.watermark {
  position: absolute;
  left: 50%;
  bottom: 30px;
  width: 308px;
  margin-left: -154px;
  color: rgba(160, 160, 165, 0.5);
  font-family: "Liberation Sans", "DejaVu Sans", sans-serif;
  font-weight: 700;
  white-space: nowrap;
  text-align: center;
}

.watermark span {
  display: block;
  font-size: 88px;
  line-height: 92px;
}

.watermark b {
  display: block;
  font-size: 50px;
  line-height: 56px;
}
</style>
